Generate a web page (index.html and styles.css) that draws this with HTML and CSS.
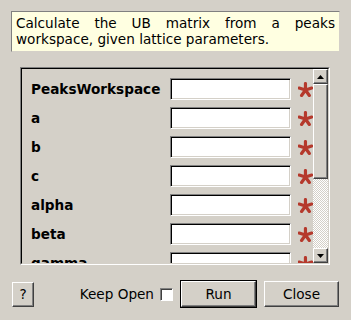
FILE: index.html
```html
<!DOCTYPE html>
<html lang="en">
<head>
  <meta charset="UTF-8" />
  <title>FindUBUsingLatticeParameters</title>
  <link rel="stylesheet" href="styles.css">
</head>
<body>
  <div class="dialog">
    <div class="summary">Calculate the UB matrix from a peaks workspace, given lattice parameters.</div>

    <div class="frame">
      <div class="viewport">
        <div class="props">
          <div class="row">
            <label>PeaksWorkspace</label>
            <input type="text" class="field" />
            <svg class="star" width="15" height="15" viewBox="0 0 15 15"><path d="M7.5 8V1.5M7.5 8L13.8 6M7.5 8L1.2 6M7.5 8L11.4 13.5M7.5 8L3.6 13.5" /></svg>
          </div>
          <div class="row">
            <label>a</label>
            <input type="text" class="field" />
            <svg class="star" width="15" height="15" viewBox="0 0 15 15"><path d="M7.5 8V1.5M7.5 8L13.8 6M7.5 8L1.2 6M7.5 8L11.4 13.5M7.5 8L3.6 13.5" /></svg>
          </div>
          <div class="row">
            <label>b</label>
            <input type="text" class="field" />
            <svg class="star" width="15" height="15" viewBox="0 0 15 15"><path d="M7.5 8V1.5M7.5 8L13.8 6M7.5 8L1.2 6M7.5 8L11.4 13.5M7.5 8L3.6 13.5" /></svg>
          </div>
          <div class="row">
            <label>c</label>
            <input type="text" class="field" />
            <svg class="star" width="15" height="15" viewBox="0 0 15 15"><path d="M7.5 8V1.5M7.5 8L13.8 6M7.5 8L1.2 6M7.5 8L11.4 13.5M7.5 8L3.6 13.5" /></svg>
          </div>
          <div class="row">
            <label>alpha</label>
            <input type="text" class="field" />
            <svg class="star" width="15" height="15" viewBox="0 0 15 15"><path d="M7.5 8V1.5M7.5 8L13.8 6M7.5 8L1.2 6M7.5 8L11.4 13.5M7.5 8L3.6 13.5" /></svg>
          </div>
          <div class="row">
            <label>beta</label>
            <input type="text" class="field" />
            <svg class="star" width="15" height="15" viewBox="0 0 15 15"><path d="M7.5 8V1.5M7.5 8L13.8 6M7.5 8L1.2 6M7.5 8L11.4 13.5M7.5 8L3.6 13.5" /></svg>
          </div>
          <div class="row">
            <label>gamma</label>
            <input type="text" class="field" />
            <svg class="star" width="15" height="15" viewBox="0 0 15 15"><path d="M7.5 8V1.5M7.5 8L13.8 6M7.5 8L1.2 6M7.5 8L11.4 13.5M7.5 8L3.6 13.5" /></svg>
          </div>
        </div>

        <div class="scrollbar">
          <div class="arrow"><svg width="7" height="4" viewBox="0 0 7 4"><path d="M0 4H7L3.5 0Z" /></svg></div>
          <div class="thumb"></div>
          <div class="trough"></div>
          <div class="arrow"><svg width="7" height="4" viewBox="0 0 7 4"><path d="M0 0H7L3.5 4Z" /></svg></div>
        </div>
      </div>
    </div>

    <div class="buttons">
      <button class="btn help">?</button>
      <span class="spacer"></span>
      <label class="keep">Keep Open <span class="check"></span></label>
      <span class="default"><button class="btn">Run</button></span>
      <button class="btn">Close</button>
    </div>
  </div>
</body>
</html>
```

FILE: styles.css
```css
html, body { margin: 0; padding: 0; }
body { width: 351px; height: 320px; background: #d4d0c8; font-family: "DejaVu Sans", sans-serif; font-size: 13.6px; color: #000; overflow: hidden; }
.dialog { display: flex; flex-direction: column; height: 320px; }

.summary { margin: 11px 11px 0 11px; height: 41px; box-sizing: border-box; padding: 3px 4px 0 4px; background: #ffffe1; border: 1px solid; border-color: #808080 #d4d0c8 #d4d0c8 #808080; line-height: 16px; text-align: justify; }

.frame { margin: 15px 21px 0 20px; height: 198px; box-sizing: border-box; border: 1px solid; border-color: #808080 #fff #fff #808080; }
.viewport { height: 100%; box-sizing: border-box; border: 1px solid; border-color: #000 #d4d0c8 #d4d0c8 #000; display: flex; overflow: hidden; }

.props { flex: 1; padding: 9px 0 0 9px; display: flex; flex-direction: column; gap: 7px; overflow: hidden; }
.row { display: flex; align-items: center; height: 22px; flex-shrink: 0; }
.row label { width: 140px; font-weight: bold; }
.field { width: 121px; height: 22px; box-sizing: border-box; margin: 0; padding: 0 3px; background: #fff; border: 1px solid; border-color: #808080 #fff #fff #808080; box-shadow: inset 1px 1px 0 #000, inset -1px -1px 0 #d4d0c8; font: inherit; }
.star { margin-left: 7px; }
.star path { stroke: #b5392c; stroke-width: 3.2; stroke-linecap: round; fill: none; }

.scrollbar { width: 15px; display: flex; flex-direction: column; }
.arrow { height: 15px; box-sizing: border-box; border: 1px solid; border-color: #fff #404040 #404040 #fff; box-shadow: inset -1px -1px 0 #808080; display: flex; align-items: center; justify-content: center; }
.arrow path { fill: #000; }
.thumb { height: 95px; box-sizing: border-box; border: 1px solid; border-color: #fff #404040 #404040 #fff; box-shadow: inset -1px -1px 0 #808080; }
.trough { flex: 1; background: repeating-conic-gradient(#fff 0 25%, #d4d0c8 0 50%) 0 0 / 2px 2px; }

.buttons { display: flex; align-items: center; margin: 15px 12px 0 12px; }
.spacer { flex: 1; }
.btn { height: 26px; width: 75px; box-sizing: border-box; margin: 0; padding: 0; background: #d4d0c8; border: 1px solid; border-color: #fff #404040 #404040 #fff; box-shadow: inset -1px -1px 0 #808080; font: inherit; color: #000; }
.help { width: 22px; height: 25px; }
.keep { display: flex; align-items: center; gap: 6px; margin-right: 7px; }
.check { width: 13px; height: 13px; box-sizing: border-box; background: #fff; border: 1px solid; border-color: #808080 #fff #fff #808080; box-shadow: inset 1px 1px 0 #404040; }
.default { display: flex; border: 1px solid #000; margin-right: 7px; }
```
